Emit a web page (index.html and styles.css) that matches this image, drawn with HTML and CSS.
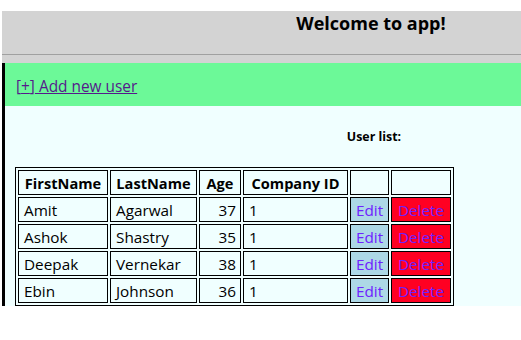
FILE: index.html
```html
<!DOCTYPE html>
<html>
<head>
<meta charset="utf-8">
<link rel="stylesheet" href="styles.css">
</head>
<body>
<div class="app">
  <header class="top">
    <h1 class="title">Welcome to app!</h1>
    <div class="rule"></div>
  </header>
  <section class="main">
    <div class="addbar">
      <a class="addlink" href="#">[<u>+</u>]<u> Add new user</u></a>
    </div>
    <div class="listarea">
      <h2 class="listtitle">User list:</h2>
      <table class="users">
        <thead>
          <tr>
            <th class="c-first">FirstName</th>
            <th class="c-last">LastName</th>
            <th class="c-age">Age</th>
            <th class="c-comp">Company ID</th>
            <th class="c-edit"></th>
            <th class="c-del"></th>
          </tr>
        </thead>
        <tbody>
          <tr><td>Amit</td><td>Agarwal</td><td class="num">37</td><td>1</td><td class="edit">Edit</td><td class="del">Delete</td></tr>
          <tr><td>Ashok</td><td>Shastry</td><td class="num">35</td><td>1</td><td class="edit">Edit</td><td class="del">Delete</td></tr>
          <tr><td>Deepak</td><td>Vernekar</td><td class="num">38</td><td>1</td><td class="edit">Edit</td><td class="del">Delete</td></tr>
          <tr><td>Ebin</td><td>Johnson</td><td class="num">36</td><td>1</td><td class="edit">Edit</td><td class="del">Delete</td></tr>
        </tbody>
      </table>
    </div>
  </section>
</div>
</body>
</html>
```
FILE: styles.css
```css
body {
  margin: 0;
  padding: 11px 0 0 2px;
  background: #ffffff;
  font-family: "Open Sans", "Noto Sans", sans-serif;
  color: #000;
}
.top {
  background: #d3d3d3;
  padding: 0 0 8px 0;
}
.title {
  margin: 0;
  padding-left: 219px;
  font-size: 18px;
  line-height: 24px;
  font-weight: 700;
  text-align: center;
}
.rule {
  margin-top: 19px;
  border-top: 1px solid #a0a0a0;
}
.main {
  border-left: 3px solid #000;
}
.addbar {
  background: #6cf998;
  padding: 12px 11px 8px;
}
.addlink {
  font-size: 15.4px;
  line-height: 22px;
  color: #551a8b;
  text-decoration: none;
}
.listarea {
  background: #f0ffff;
  padding: 0 0 0 10px;
  overflow: hidden;
}
.listtitle {
  margin: 22px 0 21px;
  padding-left: 212px;
  font-size: 12.4px;
  line-height: 18px;
  font-weight: 700;
  text-align: center;
}
.users {
  border: 1px solid #000;
  border-spacing: 2px;
  table-layout: fixed;
  font-size: 15.3px;
  line-height: 21px;
}
.users th, .users td {
  box-sizing: border-box;
  border: 1px solid #000;
  padding: 2px 4px 0 5px;
  height: 25px;
  white-space: nowrap;
}
.users th {
  font-weight: 700;
  font-size: 14.6px;
  text-align: center;
  padding: 2px 1px 0 1px;
}
.c-first { width: 90px; }
.c-last { width: 87px; }
.c-age { width: 42px; }
.c-comp { width: 105px; }
.c-edit { width: 39px; }
.c-del { width: 60px; }
.users td.num {
  text-align: right;
}
.users td.edit {
  background: #add8e6;
  color: #6f22ff;
  text-align: center;
  padding: 2px 0 0;
}
.users td.del {
  background: #ff0022;
  color: #6f22ff;
  text-align: center;
  padding: 2px 0 0;
}
```
